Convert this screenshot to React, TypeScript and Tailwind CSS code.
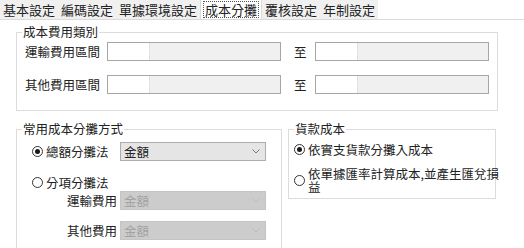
import React from "react";

const Radio = ({ checked }: { checked?: boolean }) => (
  <span className="w-[11px] h-[11px] rounded-full border border-[#333] bg-white flex items-center justify-center shrink-0">
    {checked && <span className="w-[5px] h-[5px] rounded-full bg-[#1a1a1a]" />}
  </span>
);

const Chevron = ({ color }: { color: string }) => (
  <svg width="8" height="5" viewBox="0 0 8 5" className="shrink-0">
    <path d="M0.5 0.5 L4 4 L7.5 0.5" fill="none" stroke={color} strokeWidth="1" />
  </svg>
);

const Select = ({ disabled }: { disabled?: boolean }) => (
  <div
    className={
      disabled
        ? "w-[146px] h-[19px] border border-[#c4c4c4] bg-[#cccccc] flex items-center justify-between pl-[3px] pr-[5px] text-[#a3a3a3]"
        : "w-[146px] h-[19px] border border-[#adadad] bg-[#e5e5e5] flex items-center justify-between pl-[3px] pr-[5px] text-[#222]"
    }
  >
    <span className="leading-[15px]">金額</span>
    <Chevron color={disabled ? "#bdbdbd" : "#7a7a7a"} />
  </div>
);

const RangeInput = () => (
  <div className="w-[174px] h-[19px] border border-[#a6a6a6] flex">
    <div className="w-[42px] bg-white border-r border-[#d9e3ee]" />
    <div className="flex-1 bg-[#f0f0f0]" />
  </div>
);

const tabs = ["基本設定", "編碼設定", "單據環境設定", "成本分攤", "覆核設定", "年制設定"];

export default function App() {
  return (
    <div className="w-[524px] h-[248px] bg-white overflow-hidden text-[#222] text-[12.5px] font-['Noto_Sans_CJK_TC','Noto_Sans_CJK_JP',sans-serif]">
      <div className="h-[20px] border-b border-[#dadada] flex">
        <div className="flex bg-[#f0f0f0] h-[19px]">
          {tabs.map((t) =>
            t === "成本分攤" ? (
              <div key={t} className="h-[19px] px-[2px] bg-white flex items-center border-x border-[#dadada]">
                <span className="border border-dotted border-[#555] px-[1px] leading-[15px] text-[13px]">{t}</span>
              </div>
            ) : (
              <div key={t} className="h-[19px] px-[3px] flex items-center text-[13px] leading-[15px]">
                {t}
              </div>
            )
          )}
        </div>
      </div>

      <div className="ml-[16px] mt-[12px] w-[482px] h-[79px] border border-[#dcdcdc] relative">
        <span className="absolute left-[5px] top-[-9px] px-[1px] bg-white leading-[15px]">成本費用類別</span>
        <div className="pt-[9px] pl-[8px] flex flex-col gap-[14px]">
          {["運輸費用區間", "其他費用區間"].map((l) => (
            <div key={l} className="flex items-center h-[19px]">
              <span className="w-[82px] shrink-0 leading-[15px]">{l}</span>
              <RangeInput />
              <span className="ml-[13px] mr-[8px] w-[13px] leading-[15px]">至</span>
              <RangeInput />
            </div>
          ))}
        </div>
      </div>

      <div className="ml-[16px] mt-[18px] flex gap-[6px] items-start">
        <div className="w-[266px] h-[130px] border border-[#dcdcdc] relative">
          <span className="absolute left-[5px] top-[-9px] px-[1px] bg-white leading-[15px]">常用成本分攤方式</span>
          <div className="pt-[12px] flex flex-col">
            <div className="flex items-center h-[19px]">
              <div className="w-[103px] pl-[15px] flex items-center gap-[3px]">
                <Radio checked />
                <span className="leading-[15px]">總額分攤法</span>
              </div>
              <Select />
            </div>
            <div className="flex items-center h-[18px] mt-[12px] pl-[15px] gap-[3px]">
              <Radio />
              <span className="leading-[15px]">分項分攤法</span>
            </div>
            <div className="flex items-center h-[19px]">
              <div className="w-[103px] flex justify-end pr-[3px] leading-[15px]">運輸費用</div>
              <Select disabled />
            </div>
            <div className="flex items-center h-[19px] mt-[11px]">
              <div className="w-[103px] flex justify-end pr-[3px] leading-[15px]">其他費用</div>
              <Select disabled />
            </div>
          </div>
        </div>

        <div className="w-[208px] h-[70px] border border-[#dcdcdc] relative">
          <span className="absolute left-[5px] top-[-9px] px-[1px] bg-white leading-[15px]">貨款成本</span>
          <div className="pt-[12px] pl-[5px] flex flex-col">
            <div className="flex items-center h-[15px] gap-[3px]">
              <Radio checked />
              <span className="leading-[15px] whitespace-nowrap">依實支貨款分攤入成本</span>
            </div>
            <div className="flex items-center mt-[10px] gap-[3px]">
              <Radio />
              <span className="leading-[13px] whitespace-nowrap">
                依單據匯率計算成本,並產生匯兌損
                <br />
                益
              </span>
            </div>
          </div>
        </div>
      </div>
    </div>
  );
}
